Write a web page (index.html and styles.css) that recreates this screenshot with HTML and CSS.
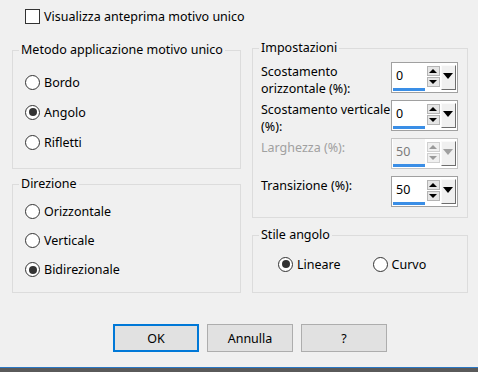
FILE: index.html
```html
<!DOCTYPE html>
<html lang="it">
<head>
  <meta charset="UTF-8">
  <title>Motivo unico</title>
  <link rel="stylesheet" href="styles.css">
</head>
<body>
  <div class="dialog">
    <label class="check-row"><span class="checkbox"></span>Visualizza anteprima motivo unico</label>

    <div class="main">
      <div class="col col-left">
        <fieldset class="group group-method">
          <legend>Metodo applicazione motivo unico</legend>
          <div class="group-body">
            <div class="radio-row"><span class="radio"></span>Bordo</div>
            <div class="radio-row"><span class="radio checked"></span>Angolo</div>
            <div class="radio-row"><span class="radio"></span>Rifletti</div>
          </div>
        </fieldset>

        <fieldset class="group group-direction">
          <legend>Direzione</legend>
          <div class="group-body">
            <div class="radio-row"><span class="radio"></span>Orizzontale</div>
            <div class="radio-row"><span class="radio"></span>Verticale</div>
            <div class="radio-row"><span class="radio checked"></span>Bidirezionale</div>
          </div>
        </fieldset>
      </div>

      <div class="col col-right">
        <fieldset class="group group-settings">
          <legend>Impostazioni</legend>
          <div class="group-body">
            <div class="field-row">
              <span class="field-label">Scostamento<br>orizzontale (%):</span>
              <div class="spin">
                <span class="spin-value">0</span>
                <span class="spin-arrows"><span class="arrow up"></span><span class="arrow down"></span></span>
                <span class="spin-drop"></span>
              </div>
            </div>
            <div class="field-row">
              <span class="field-label">Scostamento verticale<br>(%):</span>
              <div class="spin">
                <span class="spin-value">0</span>
                <span class="spin-arrows"><span class="arrow up"></span><span class="arrow down"></span></span>
                <span class="spin-drop"></span>
              </div>
            </div>
            <div class="field-row disabled">
              <span class="field-label">Larghezza (%):</span>
              <div class="spin">
                <span class="spin-value">50</span>
                <span class="spin-arrows"><span class="arrow up"></span><span class="arrow down"></span></span>
                <span class="spin-drop"></span>
              </div>
            </div>
            <div class="field-row">
              <span class="field-label">Transizione (%):</span>
              <div class="spin">
                <span class="spin-value">50</span>
                <span class="spin-arrows"><span class="arrow up"></span><span class="arrow down"></span></span>
                <span class="spin-drop"></span>
              </div>
            </div>
          </div>
        </fieldset>

        <fieldset class="group group-style">
          <legend>Stile angolo</legend>
          <div class="group-body">
            <div class="radio-row"><span class="radio checked"></span>Lineare</div>
            <div class="radio-row"><span class="radio"></span>Curvo</div>
          </div>
        </fieldset>
      </div>
    </div>

    <div class="buttons">
      <button class="btn btn-default">OK</button>
      <button class="btn">Annulla</button>
      <button class="btn">?</button>
    </div>

    <div class="taskbar"></div>
  </div>
</body>
</html>
```

FILE: styles.css
```css
* {
  box-sizing: border-box;
}
body {
  margin: 0;
  background: #f0f0f0;
  font-family: 'Noto Sans', 'Open Sans', sans-serif;
  font-size: 12.5px;
  color: #000;
}
.dialog {
  width: 478px;
  height: 372px;
  display: flex;
  flex-direction: column;
  padding-top: 8px;
  overflow: hidden;
}

/* checkbox on top */
.check-row {
  display: flex;
  align-items: center;
  gap: 4px;
  height: 16px;
  padding-left: 25px;
}
.checkbox {
  width: 15px;
  height: 15px;
  background: #fff;
  border: 1px solid #333;
}

/* two columns of group boxes */
.main {
  display: grid;
  grid-template-columns: 229px 216px;
  column-gap: 11px;
  padding-left: 12px;
  margin-top: 16px;
}
.col-left {
  padding-top: 2px;
}
.group {
  margin: 0;
  padding: 0;
  min-width: 0;
  border: 1px solid #dcdcdc;
}
.group legend {
  margin-left: 6px;
  padding: 0 2px;
  line-height: 16px;
}
.group-method .group-body {
  padding: 9px 0 11px 12px;
}
.group-direction {
  margin-top: 7px;
}
.group-direction .group-body {
  padding: 5px 0 8px 12px;
}
.group-settings .group-body {
  padding: 6px 9px 10px 8px;
}
.group-style {
  margin-top: 9px;
}
.group-style .group-body {
  display: flex;
  padding: 13px 0 20px 25px;
}

/* radios */
.radio-row {
  display: flex;
  align-items: center;
  gap: 4px;
  height: 30px;
}
.group-direction .radio-row {
  height: 29px;
}
.group-style .radio-row {
  height: 16px;
  width: 97px;
}
.radio {
  width: 15px;
  height: 15px;
  border-radius: 50%;
  background: #fff;
  border: 1px solid #333;
  display: flex;
  align-items: center;
  justify-content: center;
}
.radio.checked::after {
  content: '';
  width: 8px;
  height: 8px;
  border-radius: 50%;
  background: #333;
}

/* settings rows with spin boxes */
.field-row {
  display: flex;
  justify-content: space-between;
  align-items: flex-start;
  height: 31px;
}
.field-row + .field-row {
  margin-top: 7px;
}
.field-label {
  padding-top: 1px;
  line-height: 17px;
}
.field-row.disabled .field-label {
  color: #a0a0a0;
}
.spin {
  width: 67px;
  height: 31px;
  display: flex;
  align-items: flex-start;
  background: #fff;
  border: 1px solid #a0a0a0;
  padding: 0 1px;
}
.spin-value {
  width: 33px;
  height: 28px;
  padding-left: 3px;
  display: flex;
  align-items: center;
  border-bottom: 3px solid #3a8ee6;
  line-height: 14px;
}
.spin-arrows {
  display: flex;
  flex-direction: column;
  gap: 1px;
  margin: 3px 1px 0 2px;
}
.arrow {
  width: 13px;
  height: 10px;
  background: #e5e5e5;
  border: 1px solid #b4b4b4;
  display: flex;
  align-items: center;
  justify-content: center;
}
.arrow::after {
  content: '';
  border-left: 4px solid transparent;
  border-right: 4px solid transparent;
}
.arrow.up::after {
  border-bottom: 4px solid #000;
}
.arrow.down::after {
  border-top: 4px solid #000;
}
.spin-drop {
  width: 16px;
  height: 25px;
  margin-top: 2px;
  background: #f0f0f0;
  border-top: 1px solid #fafafa;
  border-left: 1px solid #fafafa;
  border-right: 1px solid #6d6d6d;
  border-bottom: 1px solid #6d6d6d;
  display: flex;
  justify-content: center;
  padding-top: 7px;
}
.spin-drop::after {
  content: '';
  height: 0;
  border-left: 5px solid transparent;
  border-right: 5px solid transparent;
  border-top: 6px solid #000;
}
.field-row.disabled .spin {
  border-color: #c4c4c4;
}
.field-row.disabled .spin-value {
  background: #f4f4f4;
  color: #7a7a7a;
}
.field-row.disabled .arrow {
  background: #f0f0f0;
  border-color: #d0d0d0;
}
.field-row.disabled .arrow.up::after {
  border-bottom-color: #9a9a9a;
}
.field-row.disabled .arrow.down::after {
  border-top-color: #9a9a9a;
}
.field-row.disabled .spin-drop::after {
  border-top-color: #a0a0a0;
}

/* bottom buttons */
.buttons {
  display: flex;
  gap: 8px;
  padding-left: 113px;
  margin-top: 31px;
}
.btn {
  width: 86px;
  height: 28px;
  background: #e1e1e1;
  border: 1px solid #adadad;
  font-family: inherit;
  font-size: 12.5px;
  color: #000;
  padding: 0;
}
.btn-default {
  border: 2px solid #0078d7;
}
.taskbar {
  margin-top: auto;
  height: 5px;
  background: #5a5a5a;
  border-top: 1px solid #2b78c4;
}
```
